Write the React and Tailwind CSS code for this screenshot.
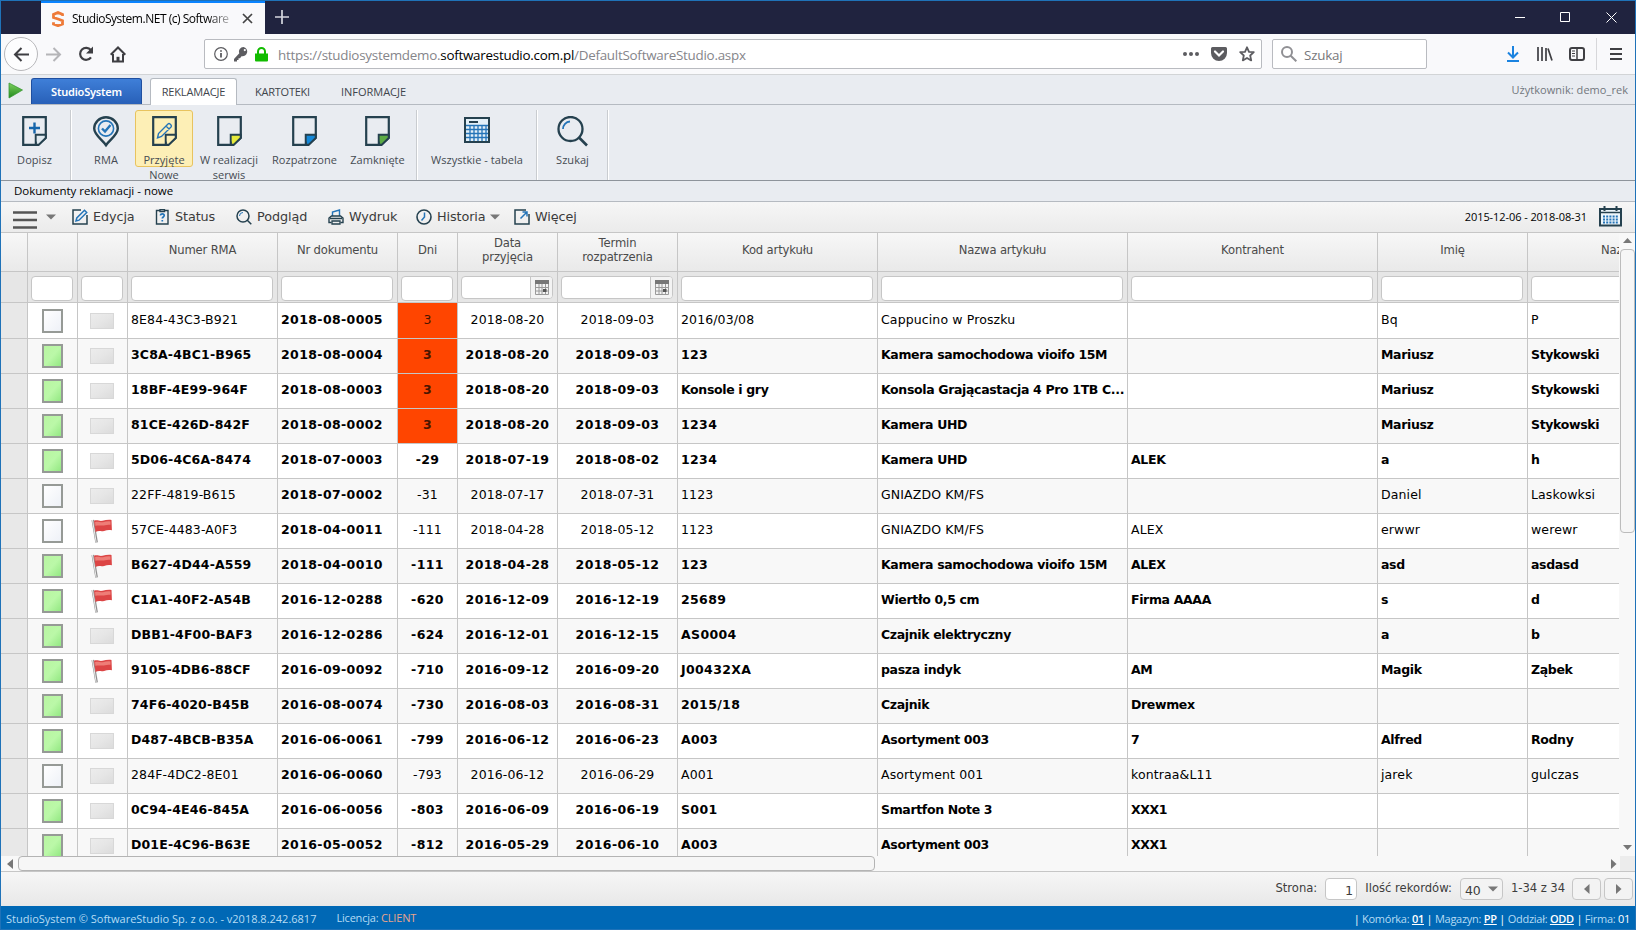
import React from "react";

const NAVY = "#25414f";
const BLUE = "#2474b8";

const columns = [
  { key: "rma", label: "Numer RMA", width: "w-[150px]" },
  { key: "doc", label: "Nr dokumentu", width: "w-[120px]" },
  { key: "days", label: "Dni", width: "w-[60px]", center: true },
  { key: "date", label: "Data przyjęcia", width: "w-[100px]", center: true, calendar: true },
  { key: "term", label: "Termin rozpatrzenia", width: "w-[120px]", center: true, calendar: true },
  { key: "code", label: "Kod artykułu", width: "w-[200px]" },
  { key: "name", label: "Nazwa artykułu", width: "w-[250px]" },
  { key: "client", label: "Kontrahent", width: "w-[250px]" },
  { key: "first", label: "Imię", width: "w-[150px]" },
  { key: "last", label: "Nazwisko", width: "w-[200px]" },
];

// green, flag, bold, then the values in the order of the columns
const rows = [
  [0, 0, 0, "8E84-43C3-B921", "2018-08-0005", "3", "2018-08-20", "2018-09-03", "2016/03/08", "Cappucino w Proszku", "", "Bq", "P"],
  [1, 0, 1, "3C8A-4BC1-B965", "2018-08-0004", "3", "2018-08-20", "2018-09-03", "123", "Kamera samochodowa vioifo 15M", "", "Mariusz", "Stykowski"],
  [1, 0, 1, "18BF-4E99-964F", "2018-08-0003", "3", "2018-08-20", "2018-09-03", "Konsole i gry", "Konsola Grającastacja 4 Pro 1TB C...", "", "Mariusz", "Stykowski"],
  [1, 0, 1, "81CE-426D-842F", "2018-08-0002", "3", "2018-08-20", "2018-09-03", "1234", "Kamera UHD", "", "Mariusz", "Stykowski"],
  [1, 0, 1, "5D06-4C6A-8474", "2018-07-0003", "-29", "2018-07-19", "2018-08-02", "1234", "Kamera UHD", "ALEK", "a", "h"],
  [0, 0, 0, "22FF-4819-B615", "2018-07-0002", "-31", "2018-07-17", "2018-07-31", "1123", "GNIAZDO KM/FS", "", "Daniel", "Laskowksi"],
  [0, 1, 0, "57CE-4483-A0F3", "2018-04-0011", "-111", "2018-04-28", "2018-05-12", "1123", "GNIAZDO KM/FS", "ALEX", "erwwr", "werewr"],
  [1, 1, 1, "B627-4D44-A559", "2018-04-0010", "-111", "2018-04-28", "2018-05-12", "123", "Kamera samochodowa vioifo 15M", "ALEX", "asd", "asdasd"],
  [1, 1, 1, "C1A1-40F2-A54B", "2016-12-0288", "-620", "2016-12-09", "2016-12-19", "25689", "Wiertło 0,5 cm", "Firma AAAA", "s", "d"],
  [1, 0, 1, "DBB1-4F00-BAF3", "2016-12-0286", "-624", "2016-12-01", "2016-12-15", "AS0004", "Czajnik elektryczny", "", "a", "b"],
  [1, 1, 1, "9105-4DB6-88CF", "2016-09-0092", "-710", "2016-09-12", "2016-09-20", "J00432XA", "pasza indyk", "AM", "Magik", "Ząbek"],
  [1, 0, 1, "74F6-4020-B45B", "2016-08-0074", "-730", "2016-08-03", "2016-08-31", "2015/18", "Czajnik", "Drewmex", "", ""],
  [1, 0, 1, "D487-4BCB-B35A", "2016-06-0061", "-799", "2016-06-12", "2016-06-23", "A003", "Asortyment 003", "7", "Alfred", "Rodny"],
  [0, 0, 0, "284F-4DC2-8E01", "2016-06-0060", "-793", "2016-06-12", "2016-06-29", "A001", "Asortyment 001", "kontraa&L11", "jarek", "gulczas"],
  [1, 0, 1, "0C94-4E46-845A", "2016-06-0056", "-803", "2016-06-09", "2016-06-19", "S001", "Smartfon Note 3", "XXX1", "", ""],
  [1, 0, 1, "D01E-4C96-B63E", "2016-05-0052", "-812", "2016-05-29", "2016-06-10", "A003", "Asortyment 003", "XXX1", "", ""],
];

// numbers are set wider than names
const boldTracking = (key, text) => {
  if (key === "rma") return "tracking-[0.15px]";
  if (["doc", "days", "date", "term"].includes(key)) return "tracking-[0.38px]";
  if (key === "code" && !/[a-z]/.test(text)) return "tracking-[0.35px]";
  return "tracking-[-0.35px]";
};

function DocIcon({ fold = "#dfe9ef", children }) {
  return (
    <svg width="25" height="30" viewBox="0 0 25 30" fill="none" stroke={NAVY} strokeWidth="2.2">
      <path d="M1.200 1.200h22.600v20.500l-7.400 7.100H1.200z" />
      <path d="M13.700 18.700h10v3.300l-6.900 6.600h-3.100z" fill={fold} strokeWidth="1.900" />
      <path d="M14 28.700v-3l0 3.100h3z" fill={NAVY} strokeWidth="1" />
      {children}
    </svg>
  );
}

function PinIcon() {
  return (
    <svg width="28" height="32" viewBox="0 0 28 32" fill="none">
      <path d="M14 29.200C10 23.500 2.200 19 2.200 12.600a11.800 11.400 0 0 1 23.600 0c0 6.400-7.800 10.900-11.800 16.600z" stroke={NAVY} strokeWidth="2.400" />
      <circle cx="14" cy="12.500" r="7.600" stroke={BLUE} strokeWidth="1.600" />
      <path d="M10 12.500l3 3 5.500-6.500" stroke={BLUE} strokeWidth="2.400" />
    </svg>
  );
}

function TableIcon() {
  return (
    <svg width="26" height="26" viewBox="0 0 26 26" fill="none">
      <rect x="1" y="1" width="24" height="24" fill="#e3f0f8" stroke={NAVY} strokeWidth="2" />
      <path d="M5 5h9" stroke={NAVY} strokeWidth="2" />
      <path d="M2 8.500h22M2 12.500h22M2 16.500h22M2 20.500h22M6 8v16M10 8v16M14 8v16M18 8v16M22 8v16" stroke={BLUE} strokeWidth="1.300" />
    </svg>
  );
}

function SearchBigIcon() {
  return (
    <svg width="31" height="31" viewBox="0 0 31 31" fill="none">
      <circle cx="13.500" cy="13" r="12" stroke={NAVY} strokeWidth="2.300" />
      <path d="M22 21.500l8 8" stroke={NAVY} strokeWidth="2.600" />
      <path d="M6 13a7.500 7.500 0 0 1 7-7.500" stroke={BLUE} strokeWidth="1.800" />
    </svg>
  );
}

function RibbonItem({ icon, label, sub, width, active }) {
  return (
    <div className={`${width} h-[70px] shrink-0 text-center font-['Open_Sans',sans-serif] text-[11px] leading-[15px] text-[#454b52]`}>
      <div className={`h-[57px] rounded-[3px] border ${active ? "border-[#e8c35f] bg-[#fdefb6]" : "border-transparent"}`}>
        <div className="flex h-[41px] items-start justify-center pt-[5px]">{icon}</div>
        <div className="whitespace-nowrap tracking-[0.05px]">{label}</div>
      </div>
      <div className="leading-[15px]">{sub}</div>
    </div>
  );
}

function Separator() {
  return <div className="h-[70px] w-[2px] shrink-0 border-r border-white bg-[#c9ccd0]" />;
}

function Caret({ className = "" }) {
  return (
    <svg width="10" height="6" viewBox="0 0 10 6" className={className}>
      <path d="M0 0.500h10l-5 5z" fill="#777" />
    </svg>
  );
}

function TitleBar() {
  return (
    <div className="flex h-[33px] bg-[#20233f] text-white">
      <div className="w-10" />
      <div className="flex h-[33px] w-[224px] items-center border-t-2 border-[#0a84ff] bg-[#f9f9fb] pl-[11px] text-black">
        <svg width="12" height="16" viewBox="0 0 12 16" fill="none">
          <path d="M10.500 5V3.500L6 1.500 1.500 3.500v3L6 8l4.500 1.700V13L6 14.700 1.500 13v-1.700" stroke="#ee7a38" strokeWidth="2.800" />
        </svg>
        <span className="ml-[8px] w-[165px] bg-gradient-to-r from-black from-[82%] to-transparent bg-clip-text font-['Open_Sans',sans-serif] text-[12px] tracking-[-0.48px] whitespace-nowrap text-transparent">
          StudioSystem.NET (c) Software
        </span>
        <svg width="11" height="11" viewBox="0 0 11 11" className="ml-[5px]" stroke="#444" strokeWidth="1.700">
          <path d="M1 1l9 9M10 1l-9 9" />
        </svg>
      </div>
      <svg width="14" height="14" viewBox="0 0 14 14" className="mt-[9px] ml-[10px]" stroke="#d5d6df" strokeWidth="1.700">
        <path d="M7 0v14M0 7h14" />
      </svg>
      <div className="ml-auto flex items-center gap-[35px] pr-[18px]">
        <svg width="10" height="10" stroke="#fff"><path d="M0 4.500h10" /></svg>
        <svg width="11" height="11" stroke="#fff" fill="none"><path d="M.5.500h9v9h-9z" /></svg>
        <svg width="11" height="11" stroke="#fff"><path d="M.5.500l10 10M10.500.500l-10 10" /></svg>
      </div>
    </div>
  );
}

function NavBar() {
  return (
    <div className="flex h-[41px] items-center border-b border-[#d2d4d6] bg-[#f9f9fb] font-['Open_Sans',sans-serif]">
      <div className="ml-[3px] flex h-[34px] w-[34px] items-center justify-center rounded-full border border-[#b8b8bb] bg-[#fdfdfe]">
        <svg width="17" height="15" viewBox="0 0 17 15" fill="none" stroke="#3f3f43" strokeWidth="2"><path d="M16 7.500H2M8.500 1L2 7.500 8.500 14" /></svg>
      </div>
      <svg width="17" height="15" viewBox="0 0 17 15" className="ml-[7px]" fill="none" stroke="#b5b5b8" strokeWidth="2"><path d="M1 7.500h14M8.500 1L15 7.500 8.500 14" /></svg>
      <svg width="16" height="16" viewBox="0 0 16 16" className="ml-[16px]" fill="none" stroke="#3f3f43" strokeWidth="2.200">
        <path d="M12.800 4A6 6 0 1 0 13 11.300" />
        <path d="M15 0.500v7H8z" fill="#3f3f43" stroke="none" />
      </svg>
      <svg width="16" height="17" viewBox="0 0 16 17" className="ml-[16px]" fill="none" stroke="#3f3f43" strokeWidth="2">
        <path d="M0.700 8.700L8 1.500l7.300 7.200M3 8v7.500h10V8" />
        <path d="M6.500 15.500v-4.700h3v4.700z" fill="#3f3f43" stroke="none" />
      </svg>
      <div className="ml-[78px] flex h-[30px] w-[1058px] items-center rounded-[2px] border border-[#b9bbc0] bg-white pl-[9px]">
        <svg width="14" height="14" viewBox="0 0 14 14" fill="none" stroke="#5c5c60"><circle cx="7" cy="7" r="6.300" strokeWidth="1.200" /><path d="M7 6v4.500M7 3.200v1.600" strokeWidth="1.800" /></svg>
        <svg width="14" height="15" viewBox="0 0 14 15" className="ml-[6px]" fill="#5c5c60">
          <path d="M9.500 0a4.500 4.500 0 0 0-4.200 6.200L0 12v2.500h3V13h1.500v-1.700H6l1.500-2.100A4.500 4.500 0 1 0 9.500 0zm1.300 4.200a1.100 1.100 0 1 1 0-2.200 1.100 1.100 0 0 1 0 2.200z" />
        </svg>
        <svg width="13" height="15" viewBox="0 0 13 15" className="ml-[7px]" fill="#12bc00">
          <path d="M0 6.500h13v7a1 1 0 0 1-1 1H1a1 1 0 0 1-1-1z" />
          <path d="M3 7V4.500a3.500 3.500 0 0 1 7 0V7" fill="none" stroke="#12bc00" strokeWidth="2" />
        </svg>
        <span className="ml-[10px] pt-[2px] text-[13.4px] tracking-[-0.25px] whitespace-nowrap text-[#85858a]">
          <span>https://studiosystemdemo.</span>
          <span className="text-black">softwarestudio.com.pl</span>
          <span>/DefaultSoftwareStudio.aspx</span>
        </span>
        <svg width="16" height="4" viewBox="0 0 16 4" className="ml-auto" fill="#5c5c60"><circle cx="2" cy="2" r="2" /><circle cx="8" cy="2" r="2" /><circle cx="14" cy="2" r="2" /></svg>
        <svg width="16" height="14" viewBox="0 0 16 14" className="ml-[12px]">
          <path d="M1.500 0h13A1.500 1.500 0 0 1 16 1.500V6A8 8 0 0 1 0 6V1.500A1.500 1.500 0 0 1 1.500 0z" fill="#5c5c60" />
          <path d="M4 4.500l4 4 4-4" fill="none" stroke="#fff" strokeWidth="2.200" strokeLinecap="round" />
        </svg>
        <svg width="16" height="16" viewBox="0 0 16 16" className="mr-[6px] ml-[12px]" fill="none" stroke="#5c5c60" strokeWidth="1.800" strokeLinejoin="round">
          <path d="M8 1.300l2 4.500 4.800.4-3.600 3.300 1 4.900L8 11.900l-4.200 2.500 1-4.900L1.200 6.200 6 5.800z" />
        </svg>
      </div>
      <div className="ml-[10px] flex h-[30px] w-[155px] items-center rounded-[2px] border border-[#b9bbc0] bg-white pl-[8px] text-[13.4px] text-[#77777b]">
        <svg width="16" height="16" viewBox="0 0 16 16" fill="none" stroke="#909094" strokeWidth="2"><circle cx="6" cy="6" r="5" /><path d="M9.700 9.700l5.600 5.600" /></svg>
        <span className="ml-[7px] pt-[2px] tracking-[-0.2px]">Szukaj</span>
      </div>
      <div className="ml-auto flex items-center pr-[13px]">
        <svg width="12" height="16" viewBox="0 0 12 16" fill="none" stroke="#1b83e0" strokeWidth="2"><path d="M6 0v11M1 6.500l5 5 5-5M0 15h12" /></svg>
        <svg width="16" height="14" viewBox="0 0 16 14" className="ml-[18px]" fill="none" stroke="#3f3f43" strokeWidth="2"><path d="M1 0v14M5 0v14M9 1v13M11 1.500L15 13.500" strokeWidth="1.700" /></svg>
        <svg width="16" height="14" viewBox="0 0 16 14" className="ml-[16px]" fill="none" stroke="#3f3f43"><rect x="1" y="1" width="14" height="12" rx="2" strokeWidth="2" /><path d="M8 1v12" strokeWidth="1.500" /><path d="M3 4h3M3 6.500h3M3 9h3" /></svg>
        <div className="ml-[11px] h-8 w-px bg-[#d7d7da]" />
        <svg width="12" height="12" viewBox="0 0 12 12" className="ml-[13px]" stroke="#3f3f43" strokeWidth="2"><path d="M0 1h12M0 6h12M0 11h12" /></svg>
      </div>
    </div>
  );
}

function RibbonTabs() {
  return (
    <div className="flex h-[30px] items-end border-b border-[#b5bac1] bg-[#e9ecf1] font-['Open_Sans',sans-serif] text-[11.5px] text-[#3f454c]">
      <svg width="15" height="17" viewBox="0 0 15 17" className="mb-[5px] ml-[7px]">
        <defs>
          <linearGradient id="play" x1="0" y1="0" x2="0" y2="1">
            <stop offset="0" stopColor="#7ed05f" />
            <stop offset="1" stopColor="#228a1d" />
          </linearGradient>
        </defs>
        <path d="M1 1l13.500 7L1 16z" fill="url(#play)" stroke="#3b9a35" strokeWidth=".8" />
      </svg>
      <div className="ml-[8px] h-[26px] w-[111px] rounded-t-[3px] border border-b-0 border-[#1f4fa0] bg-gradient-to-b from-[#3f7fd8] to-[#2860b8] text-center font-['Noto_Sans',sans-serif] text-[11px] leading-[26px] font-semibold tracking-[-0.2px] text-white">
        StudioSystem
      </div>
      <div className="relative top-px ml-[8px] h-[27px] w-[87px] rounded-t-[3px] border border-b-0 border-[#b5bac1] bg-white text-center text-[11px] leading-[26px] tracking-[-0.15px]">REKLAMACJE</div>
      <div className="w-[91px] text-center text-[11px] leading-[25px] tracking-[-0.25px]">KARTOTEKI</div>
      <div className="w-[91px] text-center text-[11px] leading-[25px]">INFORMACJE</div>
      <div className="mr-[7px] ml-auto text-[11px] leading-[28px] tracking-[0.05px] text-[#72777d]">Użytkownik: demo_rek</div>
    </div>
  );
}

function Ribbon() {
  return (
    <div className="flex h-[76px] overflow-hidden border-b border-[#8e949b] bg-[#e9ecf1] pt-[5px]">
      <RibbonItem
        width="w-[67px]"
        label="Dopisz"
        icon={<DocIcon><path d="M7 12h11M12.500 6.500v11" stroke="#1565ab" strokeWidth="2.400" /></DocIcon>}
      />
      <div className="w-[2px]" />
      <Separator />
      <div className="w-[5px]" />
      <RibbonItem width="w-[58px]" label="RMA" icon={<PinIcon />} />
      <RibbonItem
        width="w-[58px]"
        label="Przyjęte"
        sub="Nowe"
        active
        icon={
          <DocIcon fold="#fdefb6">
            <path d="M5.500 22l1-4.500L16 8a1.500 1.500 0 0 1 2 0l1 1a1.500 1.500 0 0 1 0 2L9.500 20.500zM14 10l3.500 3.500" fill="#fdefb6" stroke={BLUE} strokeWidth="1.400" />
          </DocIcon>
        }
      />
      <RibbonItem width="w-[72px]" label="W realizacji" sub="serwis" icon={<DocIcon fold="#e6ea3c" />} />
      <RibbonItem width="w-[79px]" label="Rozpatrzone" icon={<DocIcon fold="#1488d8" />} />
      <RibbonItem width="w-[67px]" label="Zamknięte" icon={<DocIcon fold="#5cab45" />} />
      <div className="w-[5px]" />
      <Separator />
      <RibbonItem width="w-[118px]" label="Wszystkie - tabela" icon={<div className="pt-[1px]"><TableIcon /></div>} />
      <Separator />
      <RibbonItem width="w-[69px]" label="Szukaj" icon={<SearchBigIcon />} />
      <Separator />
    </div>
  );
}

function Tool({ icon, label, width }) {
  return (
    <div className={`${width} flex shrink-0 items-center`}>
      {icon}
      <span className="ml-[5px] whitespace-nowrap">{label}</span>
    </div>
  );
}

function Toolbar() {
  return (
    <div className="flex h-[31px] items-center border-b border-[#c6c6c6] bg-gradient-to-b from-[#f6f6f6] to-[#ebebeb] pb-px font-['DejaVu_Sans',sans-serif] text-[12.8px] tracking-[-0.1px] text-[#3b3b3b]">
      <svg width="24" height="18" viewBox="0 0 24 18" className="mt-[7px] ml-[12px]" stroke="#555" strokeWidth="2.600">
        <path d="M0 1.500h24M0 9h24M0 16.500h24" />
      </svg>
      <Caret className="mr-[16px] ml-[9px]" />
      <Tool
        width="w-[83px]"
        label="Edycja"
        icon={
          <svg width="16" height="16" viewBox="0 0 16 16" fill="none" strokeWidth="1.500">
            <path d="M9 1H1v14h14V6" stroke={NAVY} />
            <path d="M4 12l.8-3L12.500 1.300l2.200 2.200L7 11.200z" stroke={BLUE} />
          </svg>
        }
      />
      <Tool
        width="w-[81px]"
        label="Status"
        icon={
          <svg width="15" height="16" viewBox="0 0 15 16" fill="none">
            <path d="M4.500 1.500H1.500V15h11.500V1.500h-3M5 .8h4.500v1.800H5z" stroke={NAVY} strokeWidth="1.400" />
            <path d="M5.500 6.500c0-2.200 3.700-2 3.700 0 0 1.500-1.900 1.500-1.900 3M7.300 11v1.600" stroke={BLUE} strokeWidth="1.700" />
          </svg>
        }
      />
      <Tool
        width="w-[92px]"
        label="Podgląd"
        icon={
          <svg width="16" height="16" viewBox="0 0 16 16" fill="none" strokeWidth="1.500">
            <circle cx="7" cy="7" r="6" stroke={NAVY} />
            <path d="M11 11l4.300 4.300" stroke={NAVY} />
            <path d="M3.500 7A3.500 3.500 0 0 1 7 3.500" stroke={BLUE} strokeWidth="1" />
          </svg>
        }
      />
      <Tool
        width="w-[88px]"
        label="Wydruk"
        icon={
          <svg width="16" height="16" viewBox="0 0 16 16" fill="none" strokeWidth="1.400">
            <path d="M4.500 7V3L11.500 1v6" stroke={BLUE} />
            <path d="M3.500 13.500H1V9L3.500 7h9L15 9v4.500h-2.500M2 9.500h12" stroke={NAVY} />
            <path d="M4 12h8v3H4z" stroke={NAVY} strokeWidth="1.300" />
          </svg>
        }
      />
      <Tool
        width="w-[98px]"
        label={<>Historia<Caret className="ml-[4px] inline-block align-middle" /></>}
        icon={
          <svg width="16" height="16" viewBox="0 0 16 16" fill="none">
            <circle cx="8" cy="8" r="7" stroke={NAVY} strokeWidth="1.600" />
            <path d="M8.500 3.500v4.500L5.500 11.500" stroke={BLUE} strokeWidth="1.500" />
          </svg>
        }
      />
      <Tool
        width="w-[80px]"
        label="Więcej"
        icon={
          <svg width="16" height="16" viewBox="0 0 16 16" fill="none" strokeWidth="1.500">
            <path d="M7 1H1v14h14V8M7 1h5M15 8V5" stroke={NAVY} />
            <path d="M6.500 9.500l6.500-6.500M8.500 3H13v4.500" stroke={BLUE} />
          </svg>
        }
      />
      <span className="ml-auto pt-px font-['Open_Sans',sans-serif] text-[11px] tracking-[-0.08px] whitespace-nowrap text-black">2015-12-06 - 2018-08-31</span>
      <svg width="23" height="21" viewBox="0 0 23 21" className="mr-[13px] ml-[12px]" fill="none">
        <path d="M1 3h21v16.500H1z" fill="#eef6fb" stroke={NAVY} strokeWidth="2" />
        <path d="M1 6.500h21" stroke={NAVY} strokeWidth="1.500" />
        <path d="M5.500 0v5M17.500 0v5" stroke={NAVY} strokeWidth="2" />
        <path d="M4 10.500h15M4 13.500h15M4 16.500h15" stroke={BLUE} strokeWidth="1.800" strokeDasharray="2 1.200" />
      </svg>
    </div>
  );
}

function MiniCalendar() {
  return (
    <svg width="14" height="15" viewBox="0 0 14 15" fill="none">
      <path d="M0 0h14v4H0z" fill="#777" />
      <path d="M.5 4v10.500h13V4M0 7.500h14M0 11h14M4 4v10.500M7 4v10.500M10.500 4v10.500" stroke="#9a9a9a" />
      <path d="M8 9h3.500v3H8z" fill="#555" />
    </svg>
  );
}

function FilterCell({ calendar }) {
  if (calendar) {
    return (
      <div className="mt-[4px] mr-[4px] ml-[3px] flex h-[23px] overflow-hidden rounded-[4px] border border-[#c6c6c6] bg-white">
        <div className="flex-1" />
        <div className="flex w-[22px] items-center justify-center border-l border-[#c6c6c6] bg-[#f3f3f3]">
          <MiniCalendar />
        </div>
      </div>
    );
  }
  return <div className="mt-[4px] mr-[4px] ml-[3px] h-[25px] rounded-[4px] border border-[#c6c6c6] bg-white" />;
}

function StateBox({ green }) {
  return (
    <div
      className={`h-[24px] w-[21px] border-2 border-[#969a96] ${
        green ? "bg-linear-to-br from-[#b9f5a2] via-[#bbf8a8] to-[#93e882]" : "bg-linear-to-br from-[#ffffff] to-[#eef1f7]"
      }`}
    />
  );
}

function Flag() {
  return (
    <svg width="22" height="25" viewBox="0 0 22 25">
      <path d="M1.800 1l3.800 22.500" stroke="#8f8f8f" strokeWidth="2.600" />
      <path d="M1.500 1l3.700 22.500" stroke="#ececec" strokeWidth="1" />
      <path d="M3 1.800c3.500-1.300 5 .6 8.500 0 3-.6 6-1.500 9-.8l.4 10.300c-3-.8-5-.3-7.800.6-3 .8-5.400-.6-8.600 1z" fill="#dc4545" />
      <path d="M4 3.200c3.500-1.300 5 .6 8 0 2.500-.6 5-1.100 7.500-.7v3.300c-4-.6-5.500.8-8.500.8-2.500 0-4.500-.6-6.500.4z" fill="#ee7d77" />
    </svg>
  );
}

function Envelope() {
  return <div className="h-4 w-6 border border-[#d8d8d8] bg-linear-to-br from-[#ececec] via-[#e6e6e6] to-[#dcdcdc]" />;
}

function Grid() {
  return (
    <div className="flex h-[623px] bg-[#f8f8f8]">
      <div className="w-[1618px] overflow-hidden font-['DejaVu_Sans',sans-serif]">
        <div className="flex h-[39px] w-[1727px] bg-gradient-to-b from-[#f7f7f7] to-[#e9e9e9] text-[11.6px] leading-[14px] tracking-[-0.15px] text-[#4a4a4a]">
          <div className="w-[27px] shrink-0 border-r border-b border-[#c6c6c6]" />
          <div className="w-[50px] shrink-0 border-r border-b border-[#c6c6c6]" />
          <div className="w-[50px] shrink-0 border-r border-b border-[#c6c6c6]" />
          {columns.map((col) => (
            <div key={col.key} className={`${col.width} flex shrink-0 items-center justify-center border-r border-b border-[#c6c6c6] pb-[4px] text-center`}>
              <span className={col.calendar ? "w-min" : "whitespace-nowrap"}>{col.label}</span>
            </div>
          ))}
        </div>
        <div className="flex h-[31px] w-[1727px] bg-[#e6e6e6]">
          <div className="w-[27px] shrink-0 border-r border-b border-[#c6c6c6]" />
          <div className="w-[50px] shrink-0 border-r border-b border-[#c6c6c6]"><FilterCell /></div>
          <div className="w-[50px] shrink-0 border-r border-b border-[#c6c6c6]"><FilterCell /></div>
          {columns.map((col) => (
            <div key={col.key} className={`${col.width} shrink-0 border-r border-b border-[#c6c6c6]`}>
              <FilterCell calendar={col.calendar} />
            </div>
          ))}
        </div>
        {rows.map(([green, flag, bold, ...cells], i) => (
          <div
            key={i}
            className={`flex w-[1727px] text-[12.5px] text-black ${i === 0 ? "h-[36px]" : "h-[35px]"} ${i % 2 ? "bg-[#f8f8f8]" : "bg-white"}`}
          >
            <div className="w-[27px] shrink-0 border-r border-b border-[#c6c6c6] bg-[#e8e8e8]" />
            <div className="flex w-[50px] shrink-0 items-end justify-center border-r border-b border-[#c6c6c6] pb-[5px]">
              <StateBox green={green} />
            </div>
            <div className={`flex w-[50px] shrink-0 items-end border-r border-b border-[#c6c6c6] pl-[12px] ${flag ? "pb-[4px] pl-[13px]" : "pb-[9px]"}`}>
              {flag ? <Flag /> : <Envelope />}
            </div>
            {columns.map((col, c) => {
              const strong = bold || col.key === "doc";
              const late = col.key === "days" && cells[c] === "3";
              return (
                <div
                  key={col.key}
                  className={`${col.width} flex shrink-0 items-end border-r border-b border-[#c6c6c6] pr-[3px] pb-[9px] pl-[3px] whitespace-nowrap ${
                    strong ? `font-bold ${boldTracking(col.key, cells[c])}` : "tracking-[0.12px]"
                  } ${col.center ? "justify-center" : ""} ${late ? "bg-[#ff4500] text-[#4a1500]" : ""}`}
                >
                  <span className="leading-[19px]">{cells[c]}</span>
                </div>
              );
            })}
          </div>
        ))}
      </div>
      <div className="flex w-[16px] flex-col items-center">
        <svg width="9" height="5" viewBox="0 0 9 5" className="mt-[5px]"><path d="M0 5h9L4.500 0z" fill="#777" /></svg>
        <div className="mt-[6px] h-[284px] w-[15px] rounded-[4px] border border-[#bcbcbc] bg-[#f6f6f6]" />
        <svg width="9" height="5" viewBox="0 0 9 5" className="mt-auto mb-[6px]"><path d="M0 0h9L4.500 5z" fill="#777" /></svg>
      </div>
    </div>
  );
}

function HorizontalScroll() {
  return (
    <div className="flex h-[16px] items-center border-b border-[#c6c6c6] bg-[#f8f8f8]">
      <svg width="6" height="10" viewBox="0 0 6 10" className="ml-[6px]"><path d="M6 0v10L0 5z" fill="#777" /></svg>
      <div className="ml-[5px] h-[15px] w-[857px] rounded-[4px] border border-[#b4b4b4] bg-[#f6f6f6]" />
      <svg width="6" height="10" viewBox="0 0 6 10" className="mr-[3px] ml-auto"><path d="M0 0v10l5.500-5z" fill="#777" /></svg>
      <div className="h-full w-[15px] bg-[#ececec]" />
    </div>
  );
}

function Pager() {
  return (
    <div className="flex h-[34px] items-center justify-end bg-gradient-to-b from-[#f6f6f6] to-[#e8e8e8] pr-[2px] font-['DejaVu_Sans',sans-serif] text-[11.6px] whitespace-nowrap text-[#3d3d3d]">
      <span>Strona:</span>
      <div className="ml-[8px] h-[22px] w-[32px] rounded-[4px] border border-[#c6c6c6] bg-white pr-[3px] text-right text-[12.8px] leading-[24px]">1</div>
      <span className="ml-[8px]">Ilość rekordów:</span>
      <div className="ml-[8px] flex h-[22px] w-[43px] items-center rounded-[4px] border border-[#c6c6c6] bg-[#f3f3f3] pl-[4px] text-[12.5px] tracking-[-0.2px]">
        <span className="pt-[4px]">40</span>
        <Caret className="ml-[8px]" />
      </div>
      <span className="ml-[8px] tracking-[-0.05px]">1-34 z 34</span>
      <div className="ml-[7px] flex h-[22px] w-[29px] items-center justify-center rounded-[4px] border border-[#c6c6c6] bg-[#f3f3f3]">
        <svg width="6" height="10" viewBox="0 0 6 10"><path d="M5.500 0v10L0 5z" fill="#777" /></svg>
      </div>
      <div className="ml-[3px] flex h-[22px] w-[29px] items-center justify-center rounded-[4px] border border-[#c6c6c6] bg-[#f3f3f3]">
        <svg width="6" height="10" viewBox="0 0 6 10"><path d="M0 0v10l5.500-5z" fill="#777" /></svg>
      </div>
    </div>
  );
}

function StatusBar() {
  return (
    <div className="flex h-[23px] items-center bg-[#0068b5] pt-[3px] pl-[5px] font-['Open_Sans',sans-serif] text-[11px] whitespace-nowrap text-[#b6dcf4]">
      <span>StudioSystem © SoftwareStudio Sp. z o.o. - v2018.8.242.6817</span>
      <span className="ml-[20px] pb-[2px] tracking-[-0.2px]">Licencja: <span className="text-[#e9a48c]">CLIENT</span></span>
      <span className="mr-[5px] ml-auto tracking-[-0.27px]">
        <span className="text-white">|</span> Komórka: <b className="font-semibold text-white underline">01</b> <span className="text-white">|</span> Magazyn:{" "}
        <b className="font-semibold text-white underline">PP</b> <span className="text-white">|</span> Oddział: <b className="font-semibold text-white underline">ODD</b>{" "}
        <span className="text-white">|</span> Firma: <span className="text-white">01</span>
      </span>
    </div>
  );
}

function App() {
  return (
    <div className="h-[930px] w-[1636px] overflow-hidden border border-[#1f72b8] bg-white">
      <TitleBar />
      <NavBar />
      <RibbonTabs />
      <Ribbon />
      <div className="h-[21px] border-b border-[#b5bac1] bg-[#e9ecf1] pl-[13px] font-['Open_Sans',sans-serif] text-[11.5px] leading-[20px] text-black">Dokumenty reklamacji - nowe</div>
      <Toolbar />
      <Grid />
      <HorizontalScroll />
      <Pager />
      <StatusBar />
    </div>
  );
}

export default App;
